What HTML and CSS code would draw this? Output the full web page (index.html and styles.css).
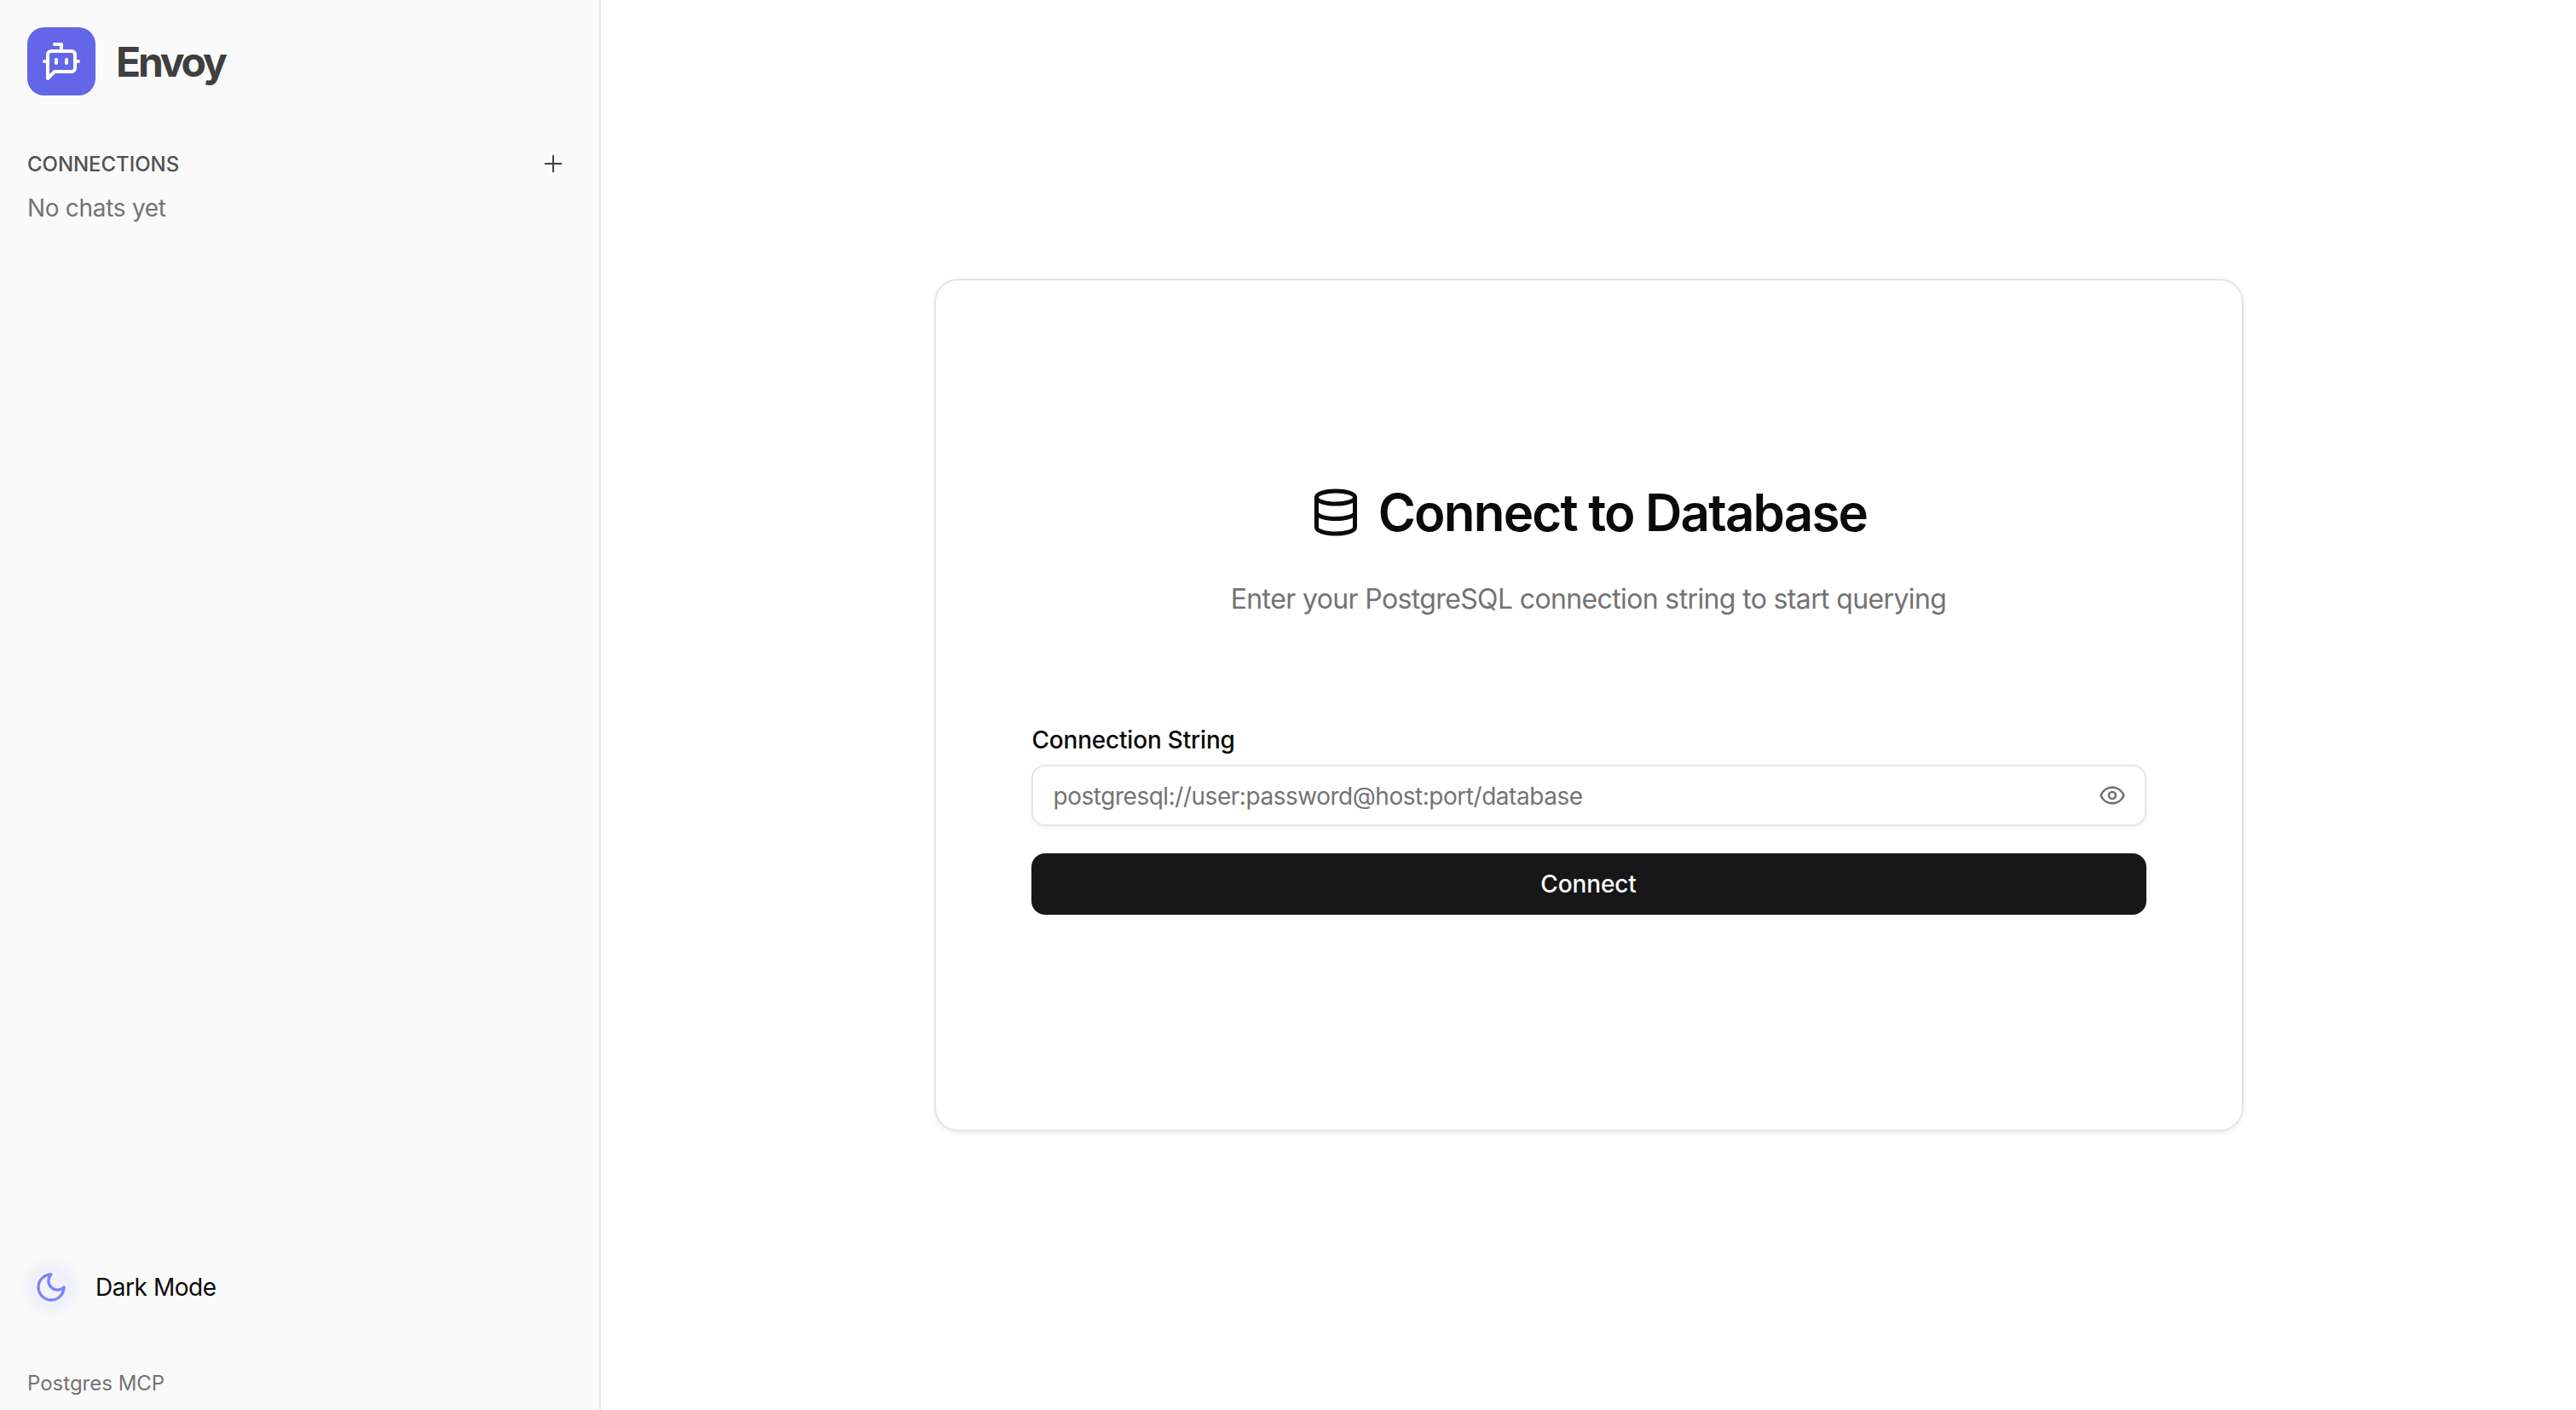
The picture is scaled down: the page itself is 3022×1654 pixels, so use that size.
FILE: index.html
```html
<!DOCTYPE html>
<html lang="en">
	<head>
		<meta charset="UTF-8" />
		<meta name="viewport" content="width=device-width, initial-scale=1.0" />
		<title>Envoy</title>
		<link rel="stylesheet" href="styles.css">
	</head>
	<body>
		<div class="app">
			<aside class="sidebar">
				<div class="brand">
					<div class="brand-logo">
						<svg viewBox="0 0 24 24" width="48" height="48" fill="none" stroke="#fff" stroke-width="2" stroke-linecap="round" stroke-linejoin="round">
							<path d="M12 6V2H8" />
							<path d="m8 18-4 4V8a2 2 0 0 1 2-2h12a2 2 0 0 1 2 2v8a2 2 0 0 1-2 2Z" />
							<path d="M2 12h2" />
							<path d="M9 11v2" />
							<path d="M15 11v2" />
							<path d="M20 12h2" />
						</svg>
					</div>
					<span class="brand-name">Envoy</span>
				</div>
				<div class="section-head">
					<span class="section-title">CONNECTIONS</span>
					<svg viewBox="0 0 24 24" width="32" height="32" fill="none" stroke="#3f3f3f" stroke-width="1.5" stroke-linecap="round" stroke-linejoin="round">
						<path d="M5 12h14" />
						<path d="M12 5v14" />
					</svg>
				</div>
				<p class="empty">No chats yet</p>
				<div class="spacer"></div>
				<div class="theme-toggle">
					<span class="theme-icon">
						<svg viewBox="0 0 24 24" width="40" height="40" fill="none" stroke="#7c83fd" stroke-width="2" stroke-linecap="round" stroke-linejoin="round">
							<path d="M12 3a6 6 0 0 0 9 9 9 9 0 1 1-9-9Z" />
						</svg>
					</span>
					<span class="theme-label">Dark Mode</span>
				</div>
				<div class="version">Postgres MCP</div>
			</aside>
			<main class="main">
				<div class="card">
					<h1 class="title">
						<svg viewBox="0 0 24 24" width="60" height="60" fill="none" stroke="#0a0a0a" stroke-width="2" stroke-linecap="round" stroke-linejoin="round">
							<ellipse cx="12" cy="5" rx="9" ry="3" />
							<path d="M3 5v14a9 3 0 0 0 18 0V5" />
							<path d="M3 12a9 3 0 0 0 18 0" />
						</svg>
						Connect to Database
					</h1>
					<p class="subtitle">Enter your PostgreSQL connection string to start querying</p>
					<label class="field-label" for="conn">Connection String</label>
					<div class="input-wrap">
						<input id="conn" class="input" type="text" placeholder="postgresql://user:password@host:port/database" />
						<svg class="eye" viewBox="0 0 24 24" width="32" height="32" fill="none" stroke="#737373" stroke-width="2" stroke-linecap="round" stroke-linejoin="round">
							<path d="M2.06 12.35a1 1 0 0 1 0-.7 10.75 10.75 0 0 1 19.88 0 1 1 0 0 1 0 .7 10.75 10.75 0 0 1-19.88 0" />
							<circle cx="12" cy="12" r="3" />
						</svg>
					</div>
					<button class="connect" type="button">Connect</button>
				</div>
			</main>
		</div>
	</body>
</html>
```

FILE: styles.css
```css
* {
	box-sizing: border-box;
}
body {
	margin: 0;
	font-family: 'Inter', sans-serif;
	color: #0a0a0a;
	background-color: #fff;
}
.app {
	display: flex;
	height: 1654px;
}
.sidebar {
	display: flex;
	flex-direction: column;
	width: 705px;
	padding: 32px 32px 15px;
	background-color: #fafafa;
	border-right: 2px solid #e5e5e5;
}
.brand {
	display: flex;
	align-items: center;
	gap: 24px;
	height: 80px;
}
.brand-logo {
	display: flex;
	align-items: center;
	justify-content: center;
	width: 80px;
	height: 80px;
	border-radius: 20px;
	background-color: #6366e9;
}
.brand-name {
	font-size: 48px;
	font-weight: 700;
	letter-spacing: -3.2px;
	color: #3f3f3f;
}
.section-head {
	display: flex;
	align-items: center;
	justify-content: space-between;
	margin-top: 60px;
	padding-right: 6px;
	height: 40px;
}
.section-title {
	font-size: 24px;
	font-weight: 500;
	letter-spacing: -0.05px;
	color: #525252;
}
.empty {
	margin: 12px 0 0;
	font-size: 28px;
	line-height: 40px;
	letter-spacing: -0.3px;
	color: #737373;
}
.spacer {
	flex: 1;
}
.theme-toggle {
	display: flex;
	align-items: center;
	gap: 32px;
	height: 64px;
	margin-bottom: 65px;
	padding-left: 8px;
}
.theme-icon {
	display: flex;
	border-radius: 50%;
	box-shadow: 0 0 24px rgba(124, 131, 253, 0.25);
	background-color: rgba(124, 131, 253, 0.06);
}
.theme-label {
	font-size: 28px;
	letter-spacing: -0.45px;
}
.version {
	font-size: 24px;
	line-height: 32px;
	color: #737373;
}
.main {
	display: flex;
	flex: 1;
	align-items: center;
	justify-content: center;
}
.card {
	display: flex;
	flex-direction: column;
	width: 1536px;
	height: 1000px;
	padding: 0 112px 16px;
	justify-content: center;
	border: 2px solid #e5e5e5;
	border-radius: 28px;
	background-color: #fff;
	box-shadow: 0 2px 6px rgba(0, 0, 0, 0.08);
}
.title {
	display: flex;
	align-items: center;
	justify-content: center;
	gap: 20px;
	margin: 0;
	font-size: 60px;
	line-height: 72px;
	font-weight: 600;
	letter-spacing: -1.8px;
}
.subtitle {
	margin: 46px 0 0;
	text-align: center;
	font-size: 32px;
	line-height: 40px;
	letter-spacing: -0.63px;
	color: #737373;
}
.field-label {
	margin-top: 125px;
	padding-left: 1px;
	font-size: 28px;
	line-height: 40px;
	font-weight: 500;
	letter-spacing: -0.2px;
}
.input-wrap {
	position: relative;
	margin-top: 9px;
}
.input {
	display: block;
	width: 100%;
	height: 72px;
	padding: 2px 96px 0 24px;
	border: 2px solid #e5e5e5;
	border-radius: 16px;
	background-color: #fff;
	box-shadow: 0 2px 4px rgba(0, 0, 0, 0.05);
	font-family: inherit;
	font-size: 28px;
	letter-spacing: -0.47px;
}
.input::placeholder {
	color: #737373;
}
.eye {
	position: absolute;
	top: 20px;
	right: 24px;
}
.connect {
	height: 72px;
	margin-top: 32px;
	border: 0;
	border-radius: 16px;
	background-color: #171717;
	color: #fafafa;
	font-family: inherit;
	font-size: 28px;
	font-weight: 500;
	letter-spacing: -0.1px;
}
```
